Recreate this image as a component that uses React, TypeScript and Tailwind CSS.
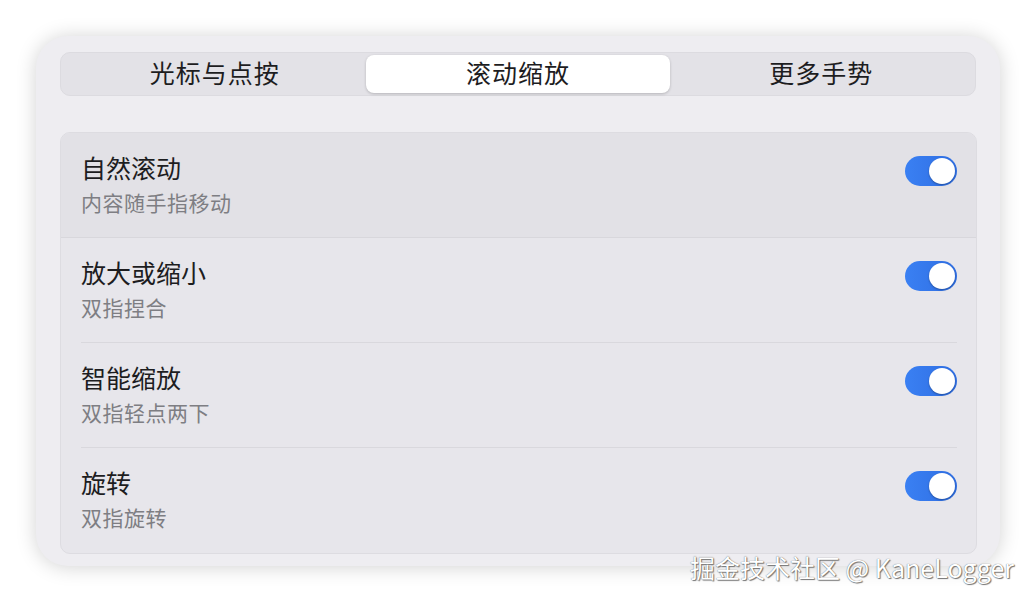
import { useState } from 'react'

const TABS = ['光标与点按', '滚动缩放', '更多手势']

const ROWS = [
  { title: '自然滚动', subtitle: '内容随手指移动' },
  { title: '放大或缩小', subtitle: '双指捏合' },
  { title: '智能缩放', subtitle: '双指轻点两下' },
  { title: '旋转', subtitle: '双指旋转' },
]

function Toggle({ on, onClick }: { on: boolean; onClick: () => void }) {
  return (
    <button
      type="button"
      onClick={onClick}
      className={`relative w-[52px] h-[30px] rounded-full shrink-0 transition-colors ${
        on ? 'bg-gradient-to-r from-[#3a80f3] to-[#2f6ee2]' : 'bg-[#d6d5da]'
      }`}
    >
      <span
        className={`absolute top-[2px] w-[26px] h-[26px] rounded-full bg-white shadow-[0_1px_2px_rgba(0,0,0,0.3)] transition-all ${
          on ? 'left-[24px]' : 'left-[2px]'
        }`}
      />
    </button>
  )
}

export default function App() {
  const [activeTab, setActiveTab] = useState(1)
  const [toggles, setToggles] = useState([true, true, true, true])

  return (
    <div
      className="relative w-[1036px] h-[602px] bg-white overflow-hidden"
      style={{ fontFamily: '"Noto Sans CJK SC", "Noto Sans", sans-serif' }}
    >
      <div className="ml-[36px] mt-[36px] w-[964px] h-[530px] rounded-[32px] bg-[#eeedf1] shadow-[0_1px_20px_rgba(0,0,0,0.18)] px-[24px] pt-[16px] flex flex-col">
        {/* ── Tabs ── */}
        <div className="grid grid-cols-3 h-[44px] p-[2px] rounded-[10px] bg-[#e3e2e7] border border-[#dcdbe0]">
          {TABS.map((t, i) => (
            <button
              key={t}
              type="button"
              onClick={() => setActiveTab(i)}
              className={`rounded-[8px] text-[25px] leading-none pb-[3px] text-[#1d1d1f] tracking-[1px] ${
                activeTab === i ? 'bg-white shadow-[0_1px_3px_rgba(0,0,0,0.2)]' : ''
              }`}
            >
              {t}
            </button>
          ))}
        </div>

        {/* ── Settings group ── */}
        <div className="mt-[36px] w-[917px] rounded-[10px] bg-[#e7e6eb] border border-[#dddce1] overflow-hidden">
          {ROWS.map((r, i) => (
            <div
              key={r.title}
              className={`h-[105px] pl-[20px] pr-[19px] ${i === 0 ? 'bg-[#e2e1e6] border-b border-[#d8d7dc]' : ''}`}
            >
              <div
                className={`h-full flex items-start justify-between ${
                  i > 0 && i < ROWS.length - 1 ? 'border-b border-[#d9d8dd]' : ''
                }`}
              >
                <div className="pt-[19px]">
                  <p className="text-[25px] leading-[30px] text-[#1d1d1f]">{r.title}</p>
                  <p className="mt-[5px] text-[21px] leading-[30px] text-[#7e7e83] tracking-[0.5px]">
                    {r.subtitle}
                  </p>
                </div>
                <div className="pt-[23px]">
                  <Toggle
                    on={toggles[i]}
                    onClick={() => setToggles(toggles.map((v, j) => (j === i ? !v : v)))}
                  />
                </div>
              </div>
            </div>
          ))}
        </div>
      </div>

      {/* ── Watermark ── */}
      <span className="absolute left-[690px] top-[551px] text-[25px] leading-[32px] text-white [text-shadow:0_0_1px_#555,1px_1px_1px_#777]">
        掘金技术社区 @ KaneLogger
      </span>
    </div>
  )
}
